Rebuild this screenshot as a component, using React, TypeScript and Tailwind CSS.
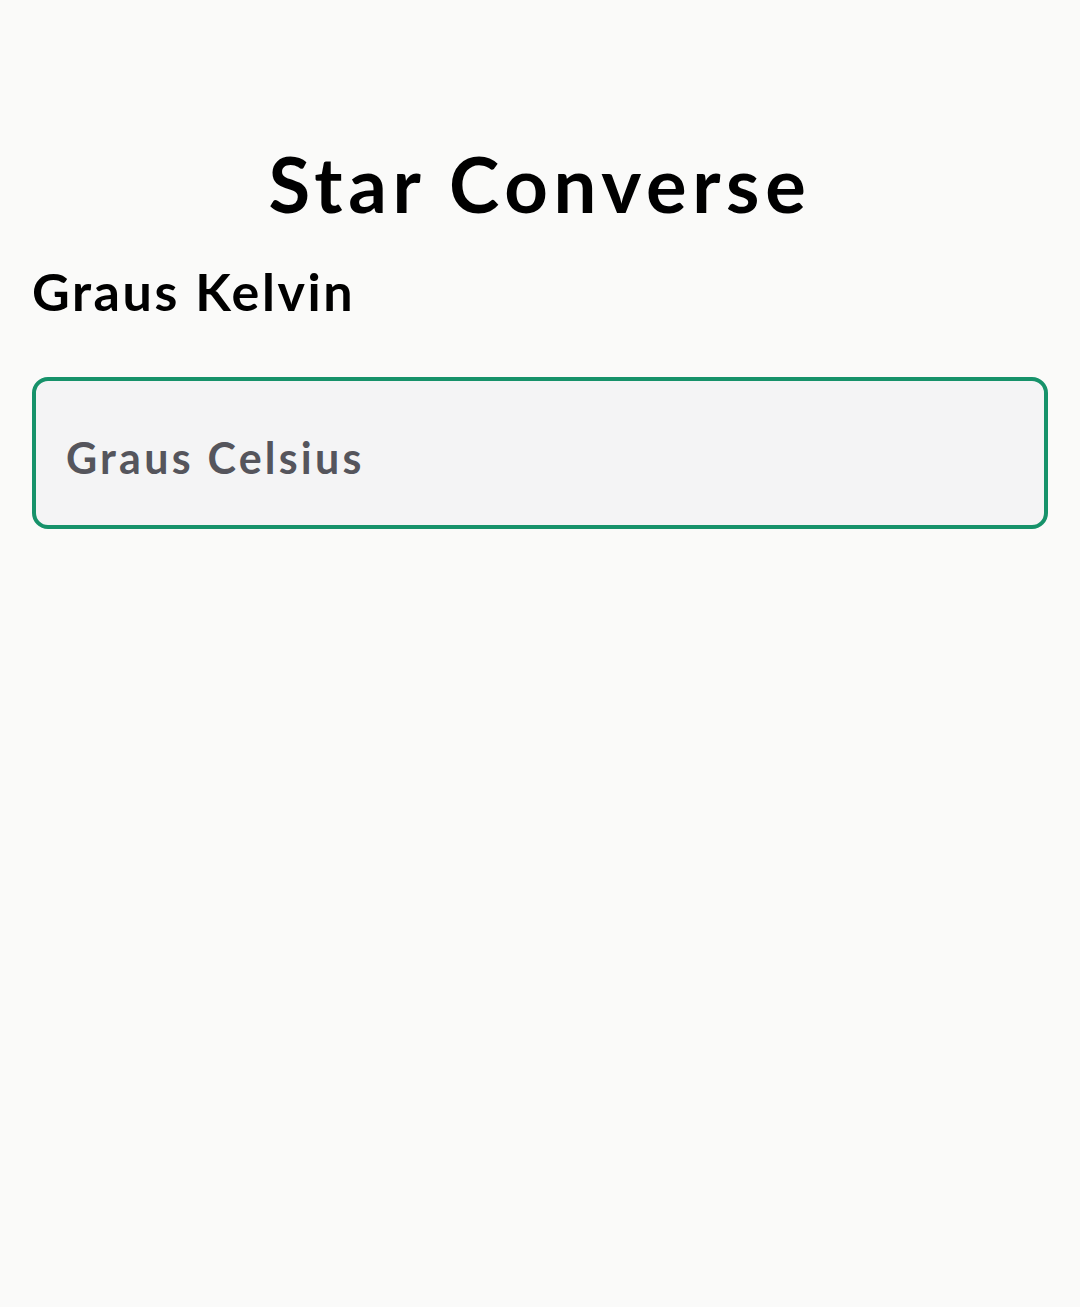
export default function App() {
  return (
    <div className="min-h-[1307px] bg-[#fafaf9] px-8 pt-[138px] font-['Lato','Noto_Sans',sans-serif]">
      <h1 className="text-center text-[76px] font-bold leading-[1.2] tracking-[0.075em] text-black">Star Converse</h1>
      <h2 className="mt-[31px] text-[52px] font-bold leading-[1.2] tracking-[0.05em] text-black">Graus Kelvin</h2>
      <input
        type="text"
        placeholder="Graus Celsius"
        className="mt-[54px] block h-[152px] w-full rounded-[16px] border-4 border-[#16926a] bg-[#f4f4f5] px-[30px] pt-[10px] text-[43px] font-bold tracking-[0.075em] text-zinc-700 outline-none placeholder:text-[#55555c]"
      />
    </div>
  );
}
